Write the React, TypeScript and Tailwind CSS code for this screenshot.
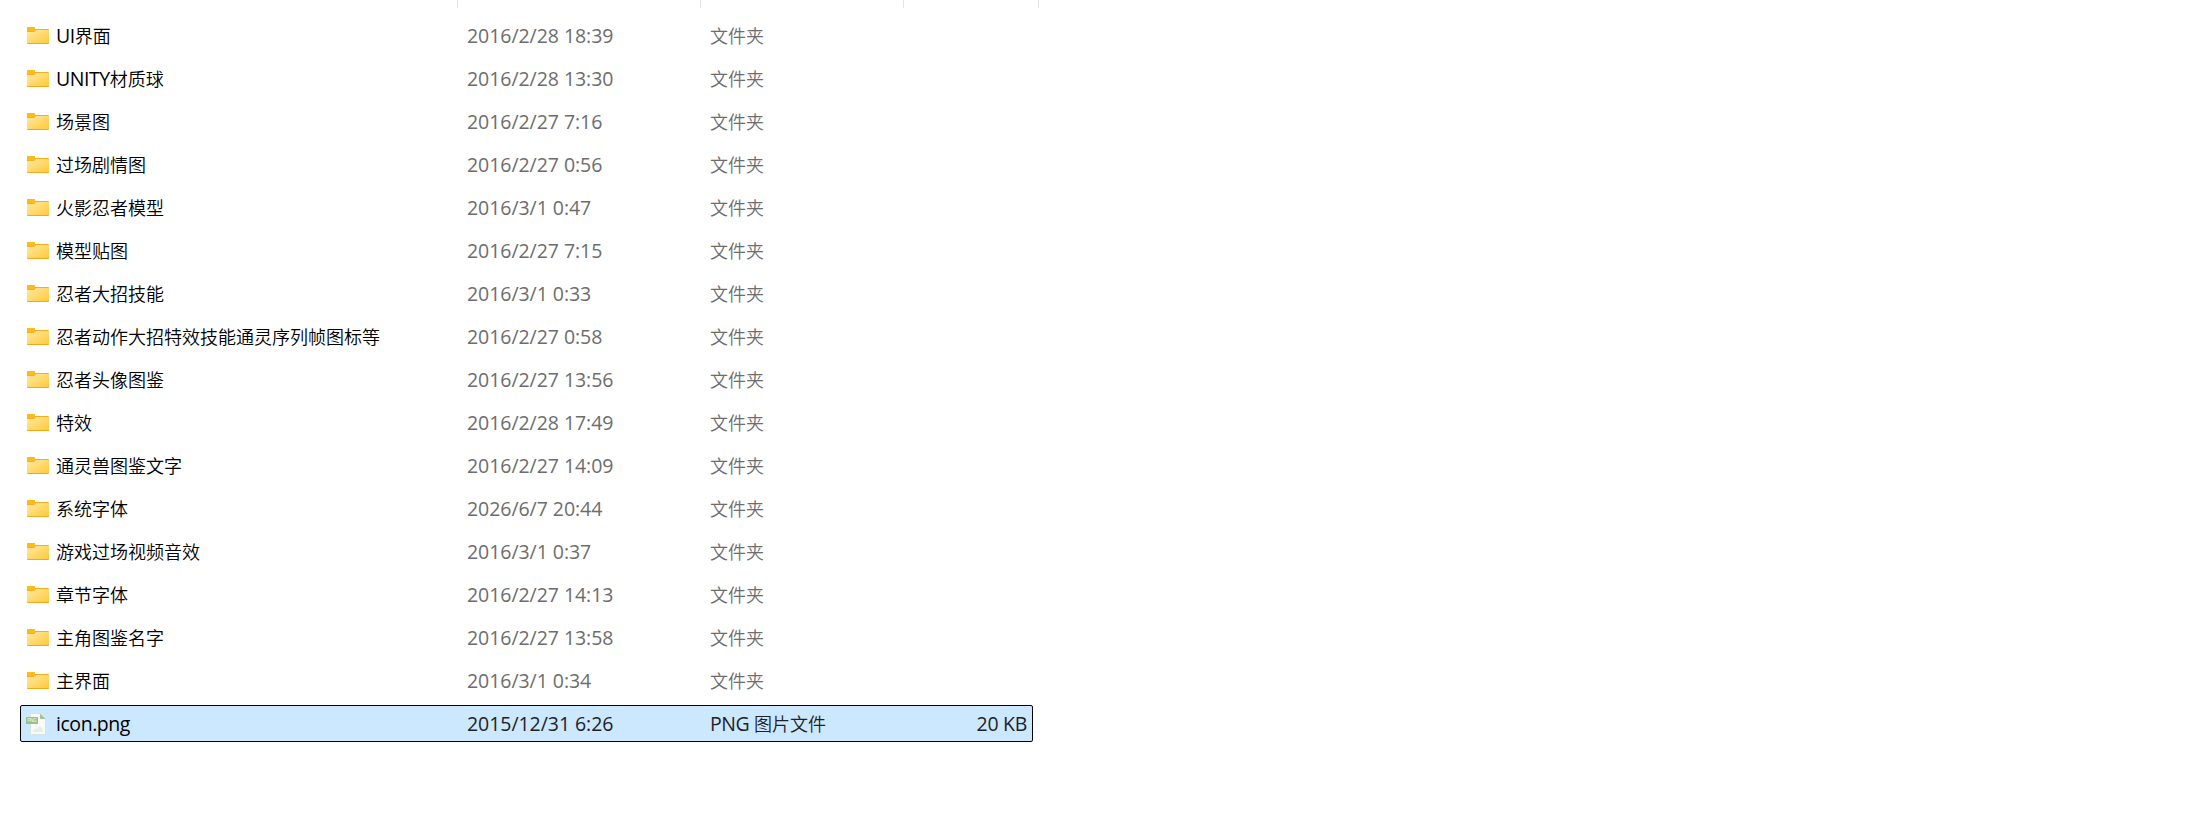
import React from "react";

type Entry = {
    name: string;
    modified: string;
    type: string;
    size?: string;
    selected?: boolean;
};

const folder = (name: string, modified: string): Entry => ({
    name,
    modified,
    type: "文件夹",
});

const entries: Entry[] = [
    folder("UI界面", "2016/2/28 18:39"),
    folder("UNITY材质球", "2016/2/28 13:30"),
    folder("场景图", "2016/2/27 7:16"),
    folder("过场剧情图", "2016/2/27 0:56"),
    folder("火影忍者模型", "2016/3/1 0:47"),
    folder("模型贴图", "2016/2/27 7:15"),
    folder("忍者大招技能", "2016/3/1 0:33"),
    folder("忍者动作大招特效技能通灵序列帧图标等", "2016/2/27 0:58"),
    folder("忍者头像图鉴", "2016/2/27 13:56"),
    folder("特效", "2016/2/28 17:49"),
    folder("通灵兽图鉴文字", "2016/2/27 14:09"),
    folder("系统字体", "2026/6/7 20:44"),
    folder("游戏过场视频音效", "2016/3/1 0:37"),
    folder("章节字体", "2016/2/27 14:13"),
    folder("主角图鉴名字", "2016/2/27 13:58"),
    folder("主界面", "2016/3/1 0:34"),
    {
        name: "icon.png",
        modified: "2015/12/31 6:26",
        type: "PNG 图片文件",
        size: "20 KB",
        selected: true,
    },
];

const FolderIcon = () => (
    <svg width="22" height="17" viewBox="0 0 22 17" className="block">
        <defs>
            <linearGradient id="folder-front" x1="0" y1="0" x2="1" y2="1">
                <stop offset="0" stopColor="#ffe9a2" />
                <stop offset="1" stopColor="#ffc937" />
            </linearGradient>
        </defs>
        <path d="M0 1Q0 0 1 0H7Q8 0 8 1V2H21Q22 2 22 3V8H0Z" fill="#f2b020" />
        <path d="M0 1Q0 0 1 0H7Q8 0 8 1V3L7 4H0Z" fill="#fdbb1b" />
        <path d="M0 5H7L9 3H22V16Q22 17 21 17H1Q0 17 0 16Z" fill="url(#folder-front)" />
        <path d="M0 16H22Q22 17 21 17H1Q0 17 0 16Z" fill="#eeaa1c" />
    </svg>
);

const PngIcon = () => (
    <svg width="20" height="22" viewBox="0 0 20 22" className="mt-px block">
        <path d="M4.5 1.5Q4.5 .5 5.5 .5H14L19.5 6V20.5Q19.5 21.5 18.5 21.5H5.5Q4.5 21.5 4.5 20.5Z" fill="#f8fbf8" stroke="#d6e3dc" />
        <path d="M14 .5L19.5 6H15Q14 6 14 5Z" fill="#9fc592" />
        <path d="M7 19V18L9.5 15.5L11 16L13 13.5H14.5L17 17V19Z" fill="#e0f1e6" />
        <circle cx="10" cy="12.8" r="1" fill="#e3f2e8" />
        <rect y="4" width="12" height="7" rx=".5" fill="#98c088" />
        <text x="1.2" y="9.3" fontSize="5" fontWeight="700" fill="#d8ebd2" textLength="9.6" fontFamily="Liberation Sans, sans-serif">PNG</text>
    </svg>
);

// Han characters are set a little smaller and lighter than the Latin text beside them
const Label = ({ text }: { text: string }) => (
    <>
        {text.split(/([\u4e00-\u9fff]+)/).filter(Boolean).map((part, idx) =>
            /[\u4e00-\u9fff]/.test(part) ? (
                <span key={idx} className="text-[18px] font-[350] tracking-normal">{part}</span>
            ) : (
                <span key={idx} className="text-[19.5px]">{part}</span>
            )
        )}
    </>
);

const Row = ({ entry }: { entry: Entry }) => (
    <li
        className={`flex h-[37px] items-center whitespace-pre rounded-xs border leading-[35px] ${
            entry.selected ? "border-black bg-[#cce8ff] text-[#1e2225]" : "border-transparent text-[#6d6d6d]"
        }`}
    >
        <div className="flex w-[446px] items-center text-black">
            <span className={`w-[35px] ${entry.selected ? "pl-[5px]" : "pl-1.5"}`}>
                {entry.selected ? <PngIcon /> : <FolderIcon />}
            </span>
            <span className="pt-0.5 tracking-[-0.45px]"><Label text={entry.name} /></span>
        </div>
        <span className="w-[243px] pt-0.5 tracking-[-0.05px]"><Label text={entry.modified} /></span>
        <span className="w-[203px] pt-0.5 tracking-[-0.4px]"><Label text={entry.type} /></span>
        <span className="flex-1 pr-[5px] pt-0.5 text-right tracking-[-0.3px]"><Label text={entry.size ?? ""} /></span>
    </li>
);

export default function App() {
    return (
        <main className="h-[825px] w-full overflow-hidden bg-white font-['Open_Sans','Noto_Sans_CJK_SC',sans-serif]">
            <div className="flex h-2">
                <div className="w-[458px] border-r border-[#e5e5e5]" />
                <div className="w-[243px] border-r border-[#e5e5e5]" />
                <div className="w-[203px] border-r border-[#e5e5e5]" />
                <div className="w-[135px] border-r border-[#e5e5e5]" />
            </div>
            <ul className="ml-5 mt-[9px] flex w-[1013px] flex-col gap-1.5">
                {entries.map((entry) => (
                    <Row key={entry.name} entry={entry} />
                ))}
            </ul>
        </main>
    );
}
